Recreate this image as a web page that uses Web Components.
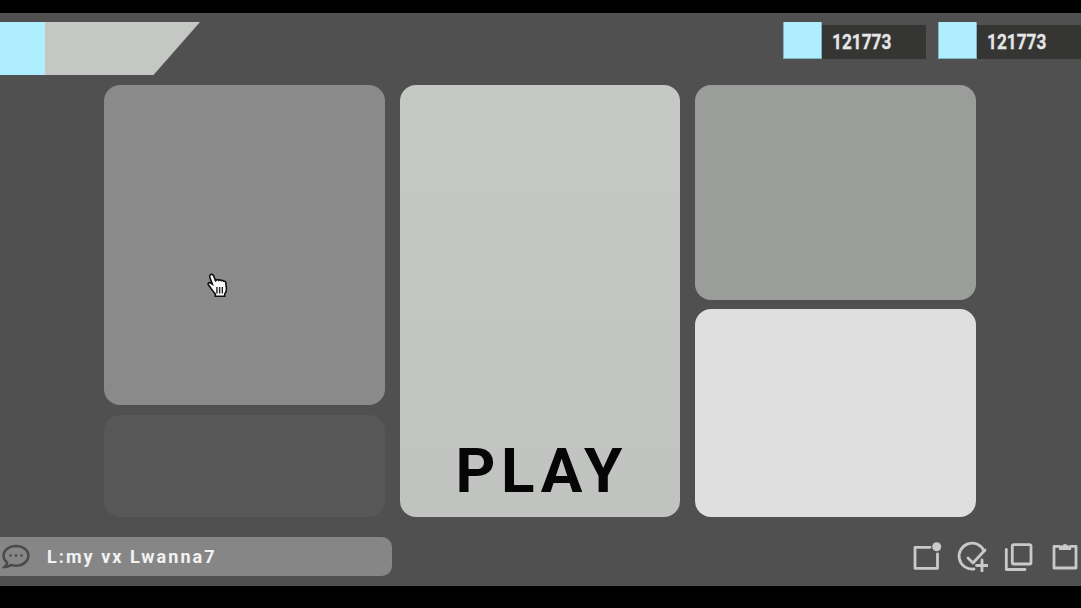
<!DOCTYPE html>
<html>
<head>
<meta charset="utf-8">
<title>Play</title>
<style>
html,body{margin:0;padding:0;background:#000;}
body{width:1081px;height:608px;overflow:hidden;font-family:Roboto,"Liberation Sans",sans-serif;}
</style>
</head>
<body>
<game-screen>
  <top-bar slot="top"></top-bar>
  <card-grid slot="main"></card-grid>
  <bottom-bar slot="bottom"></bottom-bar>
</game-screen>

<script>
class GameScreen extends HTMLElement {
  constructor(){
    super();
    this.attachShadow({mode:"open"});
    this.shadowRoot.innerHTML = `
    <style>
    :host{display:block;height:608px;padding:13px 0 22px;box-sizing:border-box;background:#000;}
    .stage{height:573px;background:#505050;display:flex;flex-direction:column;padding-top:9px;box-sizing:border-box;position:relative;overflow:hidden;}
    ::slotted([slot=main]){margin-top:10px;}
    ::slotted([slot=bottom]){margin-top:20px;}
    .cursor{position:absolute;left:206px;top:259px;width:24px;height:27px;}
    </style>
    <div class="stage">
      <slot name="top"></slot>
      <slot name="main"></slot>
      <slot name="bottom"></slot>
      <svg class="cursor" viewBox="0 0 22 25">
        <path d="M4 2.500c1.200-.8 2.500 0 3 1.200l1.700 4.300.8-.6c.8-.5 1.700-.3 2.200.3.700-.6 1.800-.4 2.300.3.800-.5 1.900-.2 2.300.5.800-.2 1.700.3 1.900 1.200l.6 5.500c.2 2.200-.5 4-1.600 5.200v2H8.500v-2.200C6.500 18.500 4.800 15.500 3.300 13.500l-1.300-1.800c-.6-1 .4-2.200 1.600-1.800l2.200 1.300L3.400 4.800C3.200 3.900 3.400 3 4 2.500z" fill="#fff" stroke="#111" stroke-width="1.500"/>
        <path d="M10 14v6M12.500 14v6M15 14v6" stroke="#222" stroke-width="1.300"/>
      </svg>
    </div>`;
  }
}

class TopBar extends HTMLElement {
  constructor(){
    super();
    this.attachShadow({mode:"open"});
    this.shadowRoot.innerHTML = `
    <style>
    :host{display:flex;justify-content:space-between;align-items:flex-start;height:53px;}
    .banner{display:flex;width:200px;height:53px;}
    .swatch{width:45px;background:#aeeeff;}
    .slant{flex:1;background:#c5c7c4;clip-path:polygon(0 0,100% 0,70% 100%,0 100%);}
    .chips{display:flex;gap:12px;width:298px;overflow:hidden;}
    </style>
    <div class="banner"><div class="swatch"></div><div class="slant"></div></div>
    <div class="chips">
      <score-chip>121773</score-chip>
      <score-chip class="last">121773</score-chip>
    </div>`;
  }
}

class ScoreChip extends HTMLElement {
  constructor(){
    super();
    this.attachShadow({mode:"open"});
    this.shadowRoot.innerHTML = `
    <style>
    :host{display:flex;flex:none;height:37px;width:143px;}
    .swatch{width:39px;height:37px;background:#aeeeff;border:1px solid #7db4c2;border-width:0 1px 1px 1px;box-sizing:border-box;flex:none;}
    .value{flex:1;margin-top:3px;height:34px;background:#353634;display:flex;align-items:center;padding-left:10px;box-sizing:border-box;}
    .num{display:inline-block;font:700 21px/1 Roboto,"Liberation Sans",sans-serif;color:#e6e6e6;transform:scaleX(.82);transform-origin:left center;white-space:nowrap;-webkit-text-stroke:.3px #e6e6e6;}
    </style>
    <div class="swatch"></div>
    <div class="value"><span class="num"><slot></slot></span></div>`;
  }
}

class CardGrid extends HTMLElement {
  constructor(){
    super();
    this.attachShadow({mode:"open"});
    this.shadowRoot.innerHTML = `
    <style>
    :host{display:grid;grid-template-columns:280.500px 280.500px 280.500px;column-gap:15px;height:432px;margin-left:104px;width:872px;}
    .col{display:flex;flex-direction:column;}
    .card{border-radius:16px;}
    .a{height:320px;background:#8a8a8a;}
    .b{flex:1;margin-top:10px;background:#575757;}
    .play{height:432px;background:linear-gradient(to bottom,#c6c8c5,#c1c3c0);display:flex;align-items:flex-end;justify-content:center;}
    .play span{font:700 62px/1 Roboto,"Liberation Sans",sans-serif;color:#060606;letter-spacing:5.600px;margin-bottom:15px;margin-right:-4px;}
    .c{height:215px;background:#9b9d9a;}
    .d{flex:1;margin-top:9px;background:#dfdfdf;}
    </style>
    <div class="col"><div class="card a"></div><div class="card b"></div></div>
    <div class="col"><div class="card play"><span>PLAY</span></div></div>
    <div class="col"><div class="card c"></div><div class="card d"></div></div>`;
  }
}

class BottomBar extends HTMLElement {
  constructor(){
    super();
    this.attachShadow({mode:"open"});
    this.shadowRoot.innerHTML = `
    <style>
    :host{display:flex;justify-content:space-between;align-items:center;height:39px;}
    .chat{width:392px;height:39px;background:#868686;border-radius:0 10px 10px 0;display:flex;align-items:center;box-sizing:border-box;padding-left:1px;}
    .chat svg{width:30px;height:27px;flex:none;}
    .chat span{margin-left:16px;font:700 18px/1 Roboto,"Liberation Sans",sans-serif;letter-spacing:2.050px;color:#f2f2f2;white-space:nowrap;}
    .tools{display:flex;gap:14px;width:172px;overflow:hidden;padding-left:1px;box-sizing:border-box;margin-bottom:2px;}
    .tools svg{width:32px;height:32px;flex:none;fill:none;stroke:#c9c9c9;stroke-width:2.800;stroke-linejoin:round;stroke-linecap:round;}
    </style>
    <div class="chat">
      <svg viewBox="0 0 30 27">
        <path d="M15 3C8 3 2.500 7 2.500 12.500c0 2.800 1.400 5.200 3.700 7-.2 1.800-1.200 3.200-2.700 4.500 2.500 0 4.700-.8 6.400-2 1.600.5 3.300.7 5.100.7 7 0 12.500-4.500 12.500-10.200C27.500 7 22 3 15 3z" fill="none" stroke="#4a4a4a" stroke-width="2.400"/>
        <circle cx="9.500" cy="12.500" r="1.300" fill="#4a4a4a"/><circle cx="15" cy="12.500" r="1.300" fill="#4a4a4a"/><circle cx="20.500" cy="12.500" r="1.300" fill="#4a4a4a"/>
      </svg>
      <span>L:my vx Lwanna7</span>
    </div>
    <div class="tools">
      <svg viewBox="0 0 32 32"><path d="M20 7.300H5v21h22.500V14"/><circle cx="26.700" cy="6.700" r="4.500" fill="#c9c9c9" stroke="none"/></svg>
      <svg viewBox="0 0 32 32"><g transform="translate(1 0)"><path d="M27 11A13 13 0 1 0 17 29"/><path d="M11 18l5 5L28 10"/><path d="M25 20v11M19.500 25.500h11"/></g></svg>
      <svg viewBox="0 0 32 32"><rect x="10.300" y="4.600" width="18.700" height="19.400" rx="1.500"/><path d="M4.300 9.500v20H23"/></svg>
      <svg viewBox="0 0 32 32"><path d="M11 6.300H6V28h22V6.300H23"/><path d="M11.500 9.500V6h3.300a2.500 2.500 0 0 1 4.400 0h3.300v3.500z" fill="#c9c9c9" stroke-width="1.200"/></svg>
    </div>`;
  }
}

customElements.define("game-screen", GameScreen);
customElements.define("top-bar", TopBar);
customElements.define("score-chip", ScoreChip);
customElements.define("card-grid", CardGrid);
customElements.define("bottom-bar", BottomBar);
</script>
</body>
</html>
